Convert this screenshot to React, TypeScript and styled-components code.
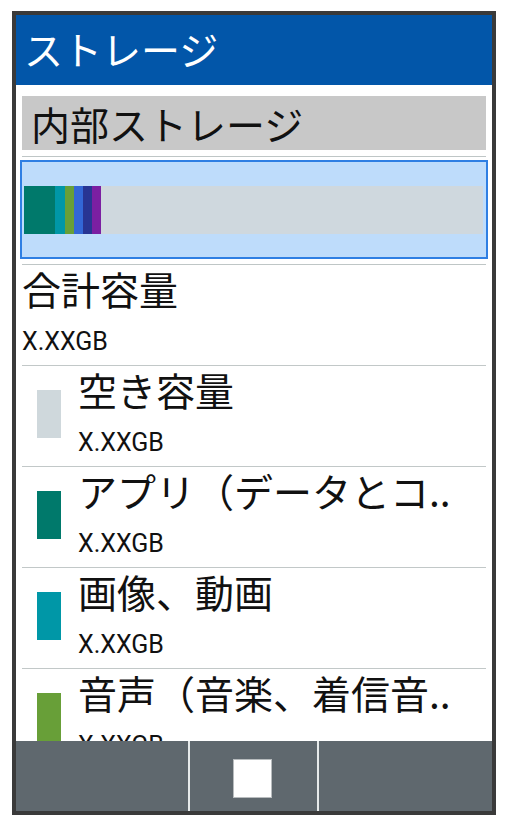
import React from "react";
import styled, { createGlobalStyle } from "styled-components";

const GlobalStyle = createGlobalStyle`
  html, body {
    margin: 0;
    padding: 0;
    background: #ffffff;
  }
  body {
    width: 507px;
    height: 826px;
    overflow: hidden;
  }
`;

const cjk = `"Noto Sans CJK JP", "Noto Sans", sans-serif`;
const latin = `Roboto, "Noto Sans CJK JP", sans-serif`;

const Frame = styled.div`
  box-sizing: border-box;
  margin: 11px 0 0 12px;
  width: 484px;
  height: 804px;
  border: 4px solid #3a3a3a;
  display: flex;
  flex-direction: column;
  background: #ffffff;
  overflow: hidden;
`;

const Header = styled.header`
  flex: 0 0 70px;
  box-sizing: border-box;
  background: #0256a9;
  color: #ffffff;
  display: flex;
  align-items: center;
  padding: 0 0 4px 8px;
  font: 400 39px/39px ${cjk};
`;

const Content = styled.main`
  flex: 1 1 auto;
  min-height: 0;
  overflow: hidden;
  padding: 11px 6px 0;
  display: flex;
  flex-direction: column;
`;

const SectionTitle = styled.div`
  flex: 0 0 54px;
  background: #c8c8c8;
  color: #111111;
  display: flex;
  align-items: center;
  padding-left: 9px;
  font: 400 39px/39px ${cjk};
`;

const Divider = styled.div<{ $top: number }>`
  flex: 0 0 1px;
  margin-top: ${(p) => p.$top}px;
  background: #bfc6c6;
`;

const StorageCard = styled.div`
  flex: 0 0 99px;
  box-sizing: border-box;
  margin: 3px -2px 0;
  border: 2px solid #2f7fe3;
  background: #bedcfb;
  padding: 24px 3px 0 2px;
`;

const UsageBar = styled.div`
  display: flex;
  height: 48px;
  background: #cfd8de;
`;

const Segment = styled.span<{ $color: string; $w: number }>`
  flex: 0 0 ${(p) => p.$w}px;
  background: ${(p) => p.$color};
`;

const Item = styled.div`
  flex: 0 0 101px;
  box-sizing: border-box;
  border-bottom: 1px solid #c2c8c8;
  display: flex;
  align-items: flex-start;
`;

const Swatch = styled.span<{ $color: string }>`
  flex: 0 0 24px;
  height: 48px;
  margin: 24px 17px 0 15px;
  background: ${(p) => p.$color};
`;

const Texts = styled.div`
  display: flex;
  flex-direction: column;
  min-width: 0;
`;

const Title = styled.div`
  padding-top: 4px;
  font: 400 39px/39px ${cjk};
  color: #111111;
  white-space: nowrap;
`;

const Value = styled.div`
  margin-top: 19px;
  font: 400 25px/30px ${latin};
  color: #111111;
  white-space: nowrap;
`;

const NavBar = styled.nav`
  flex: 0 0 70px;
  display: flex;
  background: #5f686e;
`;

const NavCell = styled.div<{ $w?: number; $divider?: boolean }>`
  flex: ${(p) => (p.$w ? `0 0 ${p.$w}px` : "1 1 auto")};
  box-sizing: border-box;
  border-left: ${(p) => (p.$divider ? "2px solid #e6eaea" : "none")};
  display: flex;
  align-items: center;
  justify-content: center;
`;

const HomeKey = styled.span`
  width: 39px;
  height: 39px;
  box-sizing: border-box;
  margin: 5px 3px 0 0;
  background: #ffffff;
  border: 1px solid #b8bcbe;
`;

const segments = [
  { color: "#00796b", w: 31 },
  { color: "#0097a7", w: 10 },
  { color: "#689f38", w: 9 },
  { color: "#3367d6", w: 9 },
  { color: "#283593", w: 9 },
  { color: "#7b1fa2", w: 9 },
];

const items = [
  { color: "#cfd8dc", title: "空き容量" },
  { color: "#00796b", title: "アプリ（データとコ.." },
  { color: "#0097a7", title: "画像、動画" },
  { color: "#689f38", title: "音声（音楽、着信音.." },
];

export default function App() {
  return (
    <>
      <GlobalStyle />
      <Frame>
        <Header>ストレージ</Header>
        <Content>
          <SectionTitle>内部ストレージ</SectionTitle>
          <Divider $top={6} />
          <StorageCard>
            <UsageBar>
              {segments.map((s, i) => (
                <Segment key={i} $color={s.color} $w={s.w} />
              ))}
            </UsageBar>
          </StorageCard>
          <Divider $top={5} />
          <Item>
            <Texts>
              <Title>合計容量</Title>
              <Value>X.XXGB</Value>
            </Texts>
          </Item>
          {items.map((it) => (
            <Item key={it.title}>
              <Swatch $color={it.color} />
              <Texts>
                <Title>{it.title}</Title>
                <Value>X.XXGB</Value>
              </Texts>
            </Item>
          ))}
        </Content>
        <NavBar>
          <NavCell $w={172} />
          <NavCell $w={129} $divider>
            <HomeKey />
          </NavCell>
          <NavCell $divider />
        </NavBar>
      </Frame>
    </>
  );
}
